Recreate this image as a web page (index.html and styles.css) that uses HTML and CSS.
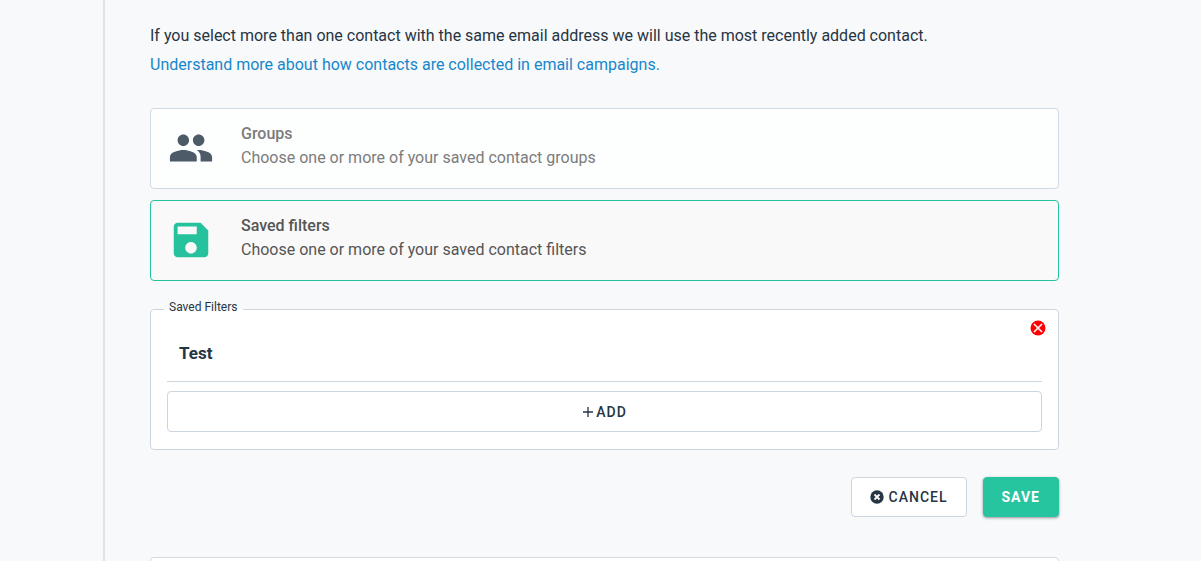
FILE: index.html
```html
<!DOCTYPE html>
<html lang="en">
<head>
    <meta charset="UTF-8">
    <meta name="viewport" content="width=device-width, initial-scale=1.0">
    <title>Saved filters</title>
    <link rel="stylesheet" href="styles.css">
</head>
<body>
    <main class="content">
        <p class="intro">
            If you select more than one contact with the same email address we will use the most recently added contact.<br>
            <a href="#">Understand more about how contacts are collected in email campaigns.</a>
        </p>

        <div class="options">
            <button type="button" class="option">
                <svg class="option-icon" viewBox="0 0 24 24" aria-hidden="true"><path d="M16 11c1.66 0 2.99-1.34 2.99-3S17.66 5 16 5c-1.66 0-3 1.34-3 3s1.34 3 3 3zm-8 0c1.66 0 2.99-1.34 2.99-3S9.66 5 8 5C6.34 5 5 6.34 5 8s1.34 3 3 3zm0 2c-2.33 0-7 1.17-7 3.5V19h14v-2.5c0-2.33-4.67-3.5-7-3.5zm8 0c-.29 0-.62.02-.97.05 1.16.84 1.97 1.97 1.97 3.45V19h6v-2.5c0-2.33-4.67-3.5-7-3.5z"/></svg>
                <span class="option-text">
                    <span class="option-title">Groups</span>
                    <span>Choose one or more of your saved contact groups</span>
                </span>
            </button>
            <button type="button" class="option selected">
                <svg class="option-icon" viewBox="0 0 24 24" aria-hidden="true"><path d="M17 3H5c-1.11 0-2 .9-2 2v14c0 1.1.89 2 2 2h14c1.1 0 2-.9 2-2V7l-4-4zm-5 16c-1.66 0-3-1.34-3-3s1.34-3 3-3 3 1.34 3 3-1.34 3-3 3zm3-10H5V5h10v4z"/></svg>
                <span class="option-text">
                    <span class="option-title">Saved filters</span>
                    <span>Choose one or more of your saved contact filters</span>
                </span>
            </button>
        </div>

        <fieldset class="filters">
            <legend>Saved Filters</legend>
            <button type="button" class="remove" aria-label="Remove filter">
                <svg viewBox="0 0 16 16" aria-hidden="true"><circle cx="8" cy="8" r="7.5" fill="#f00"/><path d="M4 4l8 8M12 4l-8 8" stroke="#fff" stroke-width="1.6"/></svg>
            </button>
            <div class="filter-name">Test</div>
            <button type="button" class="btn add">
                <svg viewBox="0 0 12 12" aria-hidden="true"><path d="M6 1v10M1 6h10" stroke="currentColor" stroke-width="1.3"/></svg>
                ADD
            </button>
        </fieldset>

        <div class="actions">
            <button type="button" class="btn">
                <svg class="cancel-icon" viewBox="0 0 14 14" aria-hidden="true"><circle cx="7" cy="7" r="6.7" fill="currentColor"/><path d="M4.500 4.500l5 5M9.500 4.500l-5 5" stroke="#fff" stroke-width="1.8"/></svg>
                CANCEL
            </button>
            <button type="button" class="btn save">SAVE</button>
        </div>

        <div class="panel"></div>
    </main>
</body>
</html>
```
FILE: styles.css
```css
* {
    box-sizing: border-box;
}
body {
    margin: 0;
    height: 100vh;
    overflow: hidden;
    background-color: #f8f9fb;
    color: #263544;
    font-family: Roboto, sans-serif;
    font-size: 16px;
}
button {
    font-family: inherit;
    cursor: pointer;
}
.content {
    margin-left: 103px;
    padding: 21px 142px 0 45px;
    border-left: 2px solid #e1e2e4;
}
.intro {
    margin: 0 0 29px;
    line-height: 29px;
}
.intro a {
    color: #1787cb;
    text-decoration: none;
}

/* Contact source cards */
.options {
    display: flex;
    flex-direction: column;
    gap: 11px;
}
.option {
    display: flex;
    align-items: flex-start;
    gap: 27px;
    width: 100%;
    padding: 13px 17px 18px;
    border: 1px solid #d0d9e8;
    border-radius: 4px;
    background-color: #fdfefe;
    color: #7c7c7c;
    font-size: 16px;
    line-height: 24px;
    text-align: left;
}
.option.selected {
    border-color: #26c19d;
    background-color: #f9f9f9;
    color: #555;
}
.option-icon {
    width: 46px;
    height: 46px;
    margin-top: 3px;
    margin-bottom: -2px;
    fill: #4d5b69;
}
.selected .option-icon {
    fill: #26c19d;
}
.option-text {
    display: flex;
    flex-direction: column;
}
.option-title {
    font-weight: 500;
}

/* Saved filters box */
.filters {
    position: relative;
    min-width: 0;
    margin: 19px 0 27px;
    padding: 23px 16px 17px;
    border: 1px solid #cbd5e0;
    border-radius: 4px;
    background-color: #fff;
}
.filters legend {
    margin-left: -3px;
    padding: 0 6px 4px 5px;
    font-size: 12px;
    line-height: 14px;
}
.remove {
    position: absolute;
    top: 2px;
    right: 12px;
    width: 16px;
    height: 16px;
    padding: 0;
    border: none;
    background: none;
}
.remove svg {
    display: block;
}
.filter-name {
    padding: 0 12px 16px;
    margin-bottom: 9px;
    border-bottom: 1px solid #cbd5e0;
    font-size: 17px;
    font-weight: 700;
    line-height: 24px;
}

.btn {
    display: flex;
    align-items: center;
    justify-content: center;
    gap: 5px;
    height: 40px;
    padding: 0 18px;
    border: 1px solid #cbd5e0;
    border-radius: 4px;
    background-color: #fff;
    color: #263544;
    font-size: 14px;
    font-weight: 500;
    letter-spacing: 1px;
}
.btn.add {
    gap: 2px;
    width: 100%;
    height: 41px;
}
.btn.add svg {
    width: 12px;
    height: 12px;
}
.btn .cancel-icon {
    width: 14px;
    height: 14px;
}
.btn.save {
    border-color: #26c49f;
    background-color: #26c49f;
    color: #fff;
    font-weight: 700;
    box-shadow: 0 1px 3px rgba(0, 0, 0, 0.4);
}
.actions {
    display: flex;
    justify-content: flex-end;
    gap: 16px;
    margin-bottom: 40px;
}
.panel {
    height: 80px;
    border: 1px solid #d3dbe3;
    border-radius: 4px;
    background-color: #fff;
}
```
